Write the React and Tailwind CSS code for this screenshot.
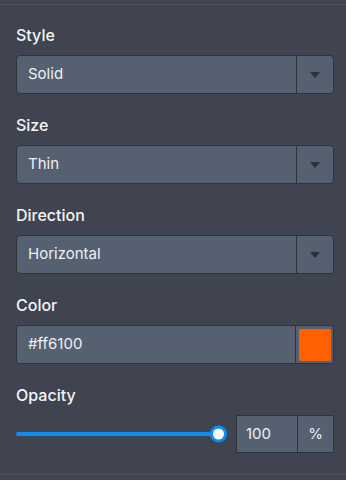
import React, { useState } from 'react';

const Label = ({ children }) => (
  <p className="mb-[12px] text-[16px] font-medium leading-none text-[#f3f4f6]">{children}</p>
);

const SelectBox = ({ value }) => (
  <div className="flex h-[39px] w-full rounded-[4px] border border-[#2f333b] bg-[#556170]">
    <div className="flex flex-1 items-center px-[11px] text-[15px] text-[#eef0f3]">{value}</div>
    <div className="flex w-[37px] items-center justify-center border-l border-[#2f333b]">
      <svg width="10" height="6" viewBox="0 0 10 6">
        <path d="M0 0 L10 0 L5 6 Z" fill="#2c3038" />
      </svg>
    </div>
  </div>
);

const App = () => {
  const [opacity] = useState(100);
  return (
    <div className="h-[480px] w-[346px] bg-[#3f4450] pt-[4px]" style={{ fontFamily: 'Inter, "Noto Sans", sans-serif' }}>
      <div className="border-t border-[#4a4f5b] pl-4 pr-3 pt-[22px]">
        <Label>Style</Label>
        <SelectBox value="Solid" />

        <div className="mt-[23px]">
          <Label>Size</Label>
          <SelectBox value="Thin" />
        </div>

        <div className="mt-[23px]">
          <Label>Direction</Label>
          <SelectBox value="Horizontal" />
        </div>

        <div className="mt-[23px]">
          <Label>Color</Label>
          <div className="flex h-[39px] w-full rounded-[3px] border border-[#2f333b] bg-[#556170]">
            <div className="flex flex-1 items-center px-[11px] text-[15px] text-[#eef0f3]">#ff6100</div>
            <div className="flex w-[38px] items-center justify-center border-l border-[#2f333b]">
              <div className="h-[32px] w-[32px] rounded-[2px] bg-[#ff6100]" />
            </div>
          </div>
        </div>

        <div className="mt-[23px]">
          <Label>Opacity</Label>
          <div className="flex h-[38px] items-center">
            <div className="relative flex h-full w-[212px] items-center">
              <div className="h-[4px] w-[202px] rounded-full bg-[#0d8ff2]" />
              <div className="absolute left-[194px] top-1/2 h-[17px] w-[17px] -translate-y-1/2 rounded-full border-[3px] border-[#0d8ff2] bg-white" />
            </div>
            <div className="ml-[8px] flex h-full flex-1 border border-[#2f333b] bg-[#556170]">
              <div className="flex w-[60px] items-center px-[9px] text-[15px] text-[#eef0f3]">{opacity}</div>
              <div className="flex flex-1 items-center justify-center border-l border-[#2f333b] text-[15px] text-[#eef0f3]">%</div>
            </div>
          </div>
        </div>
      </div>
      <div className="mt-[21px] border-t border-[#4a4f5b]" />
    </div>
  );
};

export default App;
